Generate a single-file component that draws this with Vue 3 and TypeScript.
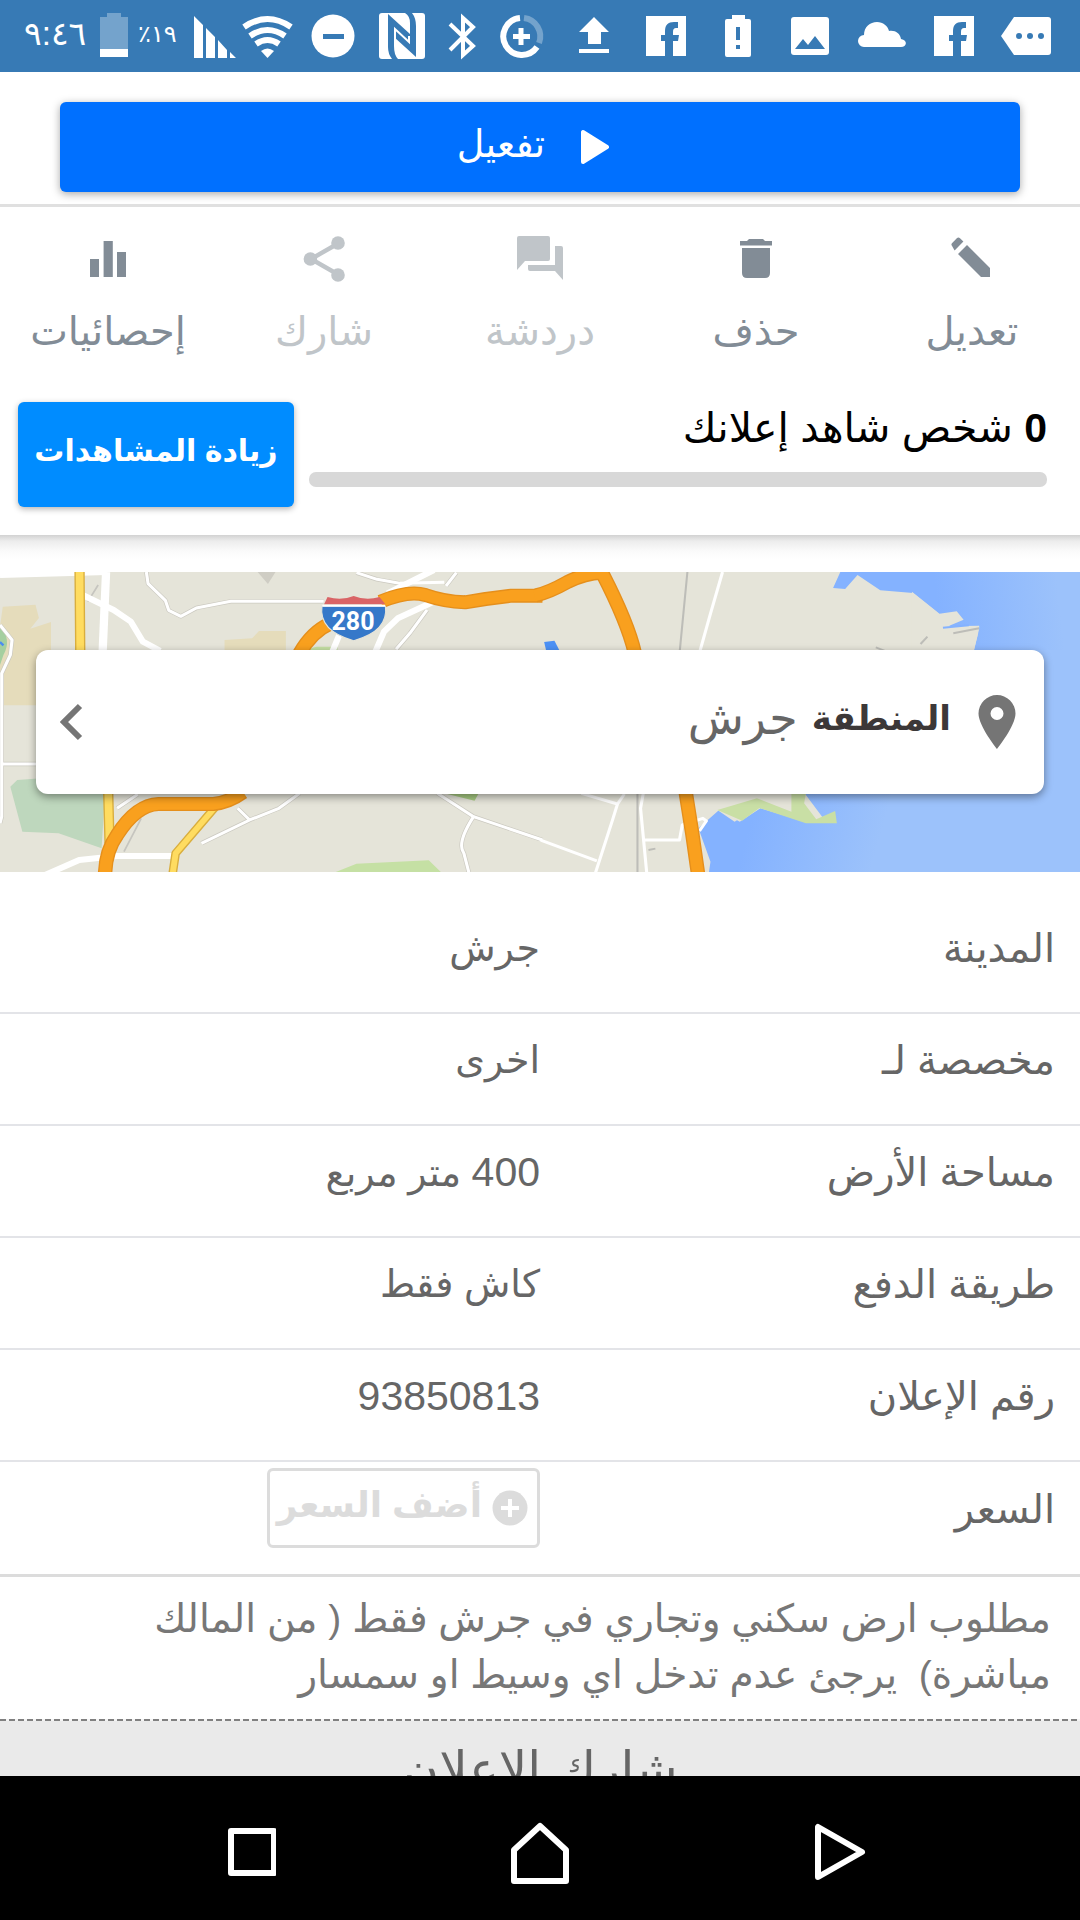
<script setup lang="ts">
interface Detail {
  label: string
  value: string
  number?: string
}

const details: Detail[] = [
  { label: 'المدينة', value: 'جرش' },
  { label: 'مخصصة لـ', value: 'اخرى' },
  { label: 'مساحة الأرض', number: '400', value: ' متر مربع' },
  { label: 'طريقة الدفع', value: 'كاش فقط' },
  { label: 'رقم الإعلان', number: '93850813', value: '' },
]
</script>

<template>
  <div class="screen" dir="rtl">
    <header class="status" dir="ltr">
      <span class="time">٩:٤٦</span>
      <svg width="42" height="72" viewBox="94 0 42 72"><path fill="#74a3cc" d="M107 13h14v4h7v32h-28V17h7z" /><path fill="#fff" d="M100 49h28v8h-28z" /></svg>
      <span class="percent">٪١٩</span>
      <svg width="50" height="72" viewBox="188 0 50 72"><path fill="#fff" d="M194 16l9 9v33h-9zM206 28l9 9v21h-9zM218 40l9 10v8h-9zM230 52l6 6h-6z" /></svg>
      <svg width="62" height="72" viewBox="238 0 62 72">
        <g fill="none" stroke="#fff" stroke-width="6">
          <path d="M244 27Q267.500 11 291 27M250 36Q267.500 24 285 36M256 44Q267.500 36 279 44" />
        </g>
        <path fill="#fff" d="M261 51q6.500-5 13 0l-6.500 7z" />
      </svg>
      <svg width="66" height="72" viewBox="300 0 66 72"><circle cx="333" cy="36" r="21.500" fill="#fff" /><path fill="#377ab5" d="M323 34h21v5h-21z" /></svg>
      <svg width="72" height="72" viewBox="366 0 72 72">
        <rect x="379" y="13" width="46" height="46" rx="3" fill="#fff" />
        <path fill="#377ab5" d="M388 14l22 20V23q0-7-5-10h7q4 5 4 13v31l-22-20v9q0 9 4 13h-6q-4-5-4-12z" />
        <path fill="none" stroke="#fff" stroke-width="2" d="M395 40V29l14 13v-6" />
      </svg>
      <svg width="48" height="72" viewBox="438 0 48 72"><path fill="none" stroke="#fff" stroke-width="4" d="M450 24l23 22-10 9V18l10 9-23 23" /></svg>
      <svg class="notice" width="72" height="72" viewBox="486 0 72 72">
        <g fill="none" stroke-width="6">
          <path stroke="#fff" d="M520 18a18.500 18.500 0 1 0 17 29" />
          <path stroke="#74a3cc" d="M524 18a18.500 18.500 0 0 1 15 25" />
          <path stroke="#fff" stroke-width="5" d="M521 28v17M513 36.500h17" />
        </g>
      </svg>
      <svg width="72" height="72" viewBox="558 0 72 72"><path fill="#fff" d="M594 17l15 15h-8v12h-13V32h-9zM579 49h30v4h-30z" /></svg>
      <svg width="72" height="72" viewBox="630 0 72 72"><path fill="#fff" d="M646 16h40v40h-13V41h5l1-6h-6v-3c0-3 1-4 3-4h2v-6h-4c-6 0-9 3-9 9v4h-4v6h4v15h-19z" /></svg>
      <svg width="72" height="72" viewBox="702 0 72 72"><path fill="#fff" d="M732 15h13v4h4q2 0 2 2v34q0 2-2 2h-22q-2 0-2-2V21q0-2 2-2h5z" /><path fill="#377ab5" d="M736 27h4v13h-4zM736 45h4v4h-4z" /></svg>
      <svg width="72" height="72" viewBox="774 0 72 72"><rect x="791" y="17" width="38" height="38" rx="3" fill="#fff" /><path fill="#377ab5" d="M795 49l8-10 5 6 7-9 10 13z" /></svg>
      <svg width="72" height="72" viewBox="846 0 72 72"><path fill="#fff" d="M864 47a6 6 0 0 1 0-12c0-8 6-13 13-13 6 0 11 4 12 9 6-1 11 2 12 8 7 1 6 8 0 8z" /></svg>
      <svg width="72" height="72" viewBox="918 0 72 72"><path fill="#fff" d="M934 16h40v40h-13V41h5l1-6h-6v-3c0-3 1-4 3-4h2v-6h-4c-6 0-9 3-9 9v4h-4v6h4v15h-19z" /></svg>
      <svg width="72" height="72" viewBox="990 0 72 72"><path fill="#fff" d="M1014 17h34q3 0 3 3v32q0 3-3 3h-34l-13-19z" /><g fill="#377ab5"><circle cx="1019" cy="36" r="3" /><circle cx="1030" cy="36" r="3" /><circle cx="1041" cy="36" r="3" /></g></svg>
    </header>

    <main class="content">
      <section class="activate-bar">
        <button class="activate" type="button">
          <svg width="28" height="36" viewBox="0 0 28 36"><path fill="#fff" stroke="#fff" stroke-width="4" stroke-linejoin="round" d="M2 3v30l24-15z" /></svg>
          <span>تفعيل</span>
        </button>
      </section>

      <section class="owner">
        <nav class="actions">
          <button type="button">
            <svg width="48" height="54" viewBox="0 0 24 27"><path d="M21 22v-4.500L9.500 6 5 10.500 16.500 22zM3.300 8.700L7.700 4.300 6 2.600q-.8-.8-1.600 0L2.100 5q-.8.800 0 1.600z" /></svg>
            <span>تعديل</span>
          </button>
          <button type="button">
            <svg width="48" height="54" viewBox="0 0 24 27"><path d="M5 7.500h14V20q0 2.500-2.500 2.500h-9Q5 22.500 5 20zM8.500 3h7l1 1H20v2.200H4V4h3.500z" /></svg>
            <span>حذف</span>
          </button>
          <button type="button" class="faded">
            <svg width="48" height="54" viewBox="0 0 24 27"><path d="M22.500 6.500h-3v9.500H6v2q0 1 1 1h12.500l4 4.500V7.500q0-1-1-1zM17 13V2.500q0-1-1-1H1.500q-1 0-1 1V18.500l4-4.500H16q1 0 1-1z" /></svg>
            <span>دردشة</span>
          </button>
          <button type="button" class="faded">
            <svg width="48" height="54" viewBox="0 0 24 27"><path fill="none" stroke="currentColor" stroke-width="2.200" d="M19.500 5L5.500 13l14 8" /><circle cx="19" cy="5" r="3.400" /><circle cx="5.200" cy="13" r="3.400" /><circle cx="19" cy="21" r="3.400" /></svg>
            <span>شارك</span>
          </button>
          <button type="button">
            <svg width="48" height="54" viewBox="0 0 24 27"><path d="M3 13h4.500v9H3zM9.800 4h4.600v18H9.800zM16.500 9.500H21V22h-4.500z" /></svg>
            <span>إحصائيات</span>
          </button>
        </nav>
        <div class="views">
          <div class="counter">
            <p id="views-label"><b>0</b> شخص شاهد إعلانك</p>
            <div class="track" role="progressbar" aria-valuenow="0" aria-labelledby="views-label"></div>
          </div>
          <button class="boost" type="button">زيادة المشاهدات</button>
        </div>
      </section>
      <div class="owner-shade"></div>

      <section class="map">
        <svg class="map-art" viewBox="0 0 1080 300" preserveAspectRatio="xMidYMid slice" aria-hidden="true">
          <defs>
            <linearGradient id="bay-north" gradientUnits="userSpaceOnUse" x1="1150" y1="100" x2="1500" y2="60">
              <stop offset="0" stop-color="#84b2ff" />
              <stop offset="1" stop-color="#9cc2fb" />
            </linearGradient>
            <linearGradient id="bay-south" gradientUnits="userSpaceOnUse" x1="600" y1="830" x2="960" y2="930">
              <stop offset="0" stop-color="#84b2ff" />
              <stop offset="1" stop-color="#9cc2fb" />
            </linearGradient>
          </defs>
          <rect width="1080" height="300" fill="#e5e4d9" />
          <g transform="translate(0 -12) scale(.3444 .3333)" fill="none" stroke-linejoin="round">
            <g fill="#e5dcbb" stroke="none">
              <path d="M8 140l95-6 10 40-25 32 60-20v250H0V200zM652 240l80-5 20-22h78v60H652z" />
            </g>
            <path fill="#bed7bd" d="M50 660l70-5 185 40-10 170-125-45-105-5-35-135z" />
            <path fill="#a5cfa0" d="M0 195q35 45 10 90l-10 30z" />
            <path stroke="#4b8df0" stroke-width="7" d="M0 246l10 10" />
            <path fill="#c5e0a4" d="M975 936l60-25 210-10 35 35zM880 270l40-10h60v20z" />
            <path fill="#a8cc83" d="M1290 700h100l-12 22z" />
            <path stroke="#c6c5bf" stroke-width="5" d="M285 75l-30 50M410 775l-50 100" />
            <path fill="#cfcdc4" d="M748 36h52l-22 36z" />
            <g stroke="#cbc9c0" stroke-width="13">
              <path d="M425 36l5 35 50 50 10 30 35 18 45-25 100-20h270M1035 38l60 20 65 12M1325 38l-30 40M1240 150l-50 70-40 48M0 195l35 45-5 45-25 55v430L0 790M5 612h100M870 700l-60 45-85 35-140 70M690 745l35 35M1270 700l105 70 200 70M1375 770q-50 80-28 110l15 60M340 745l60-42" />
            </g>
            <g stroke="#fff" stroke-width="9">
              <path d="M425 36l5 35 50 50 10 30 35 18 45-25 100-20h270M1035 38l60 20 65 12 130-3M1325 38l-30 40M1240 150l-50 70-40 48M0 195l35 45-5 45-25 55v430L0 790M5 612h100M870 700l-60 45-85 35-140 70M690 745l35 35M1270 700l105 70 200 70M1375 770q-50 80-28 110l15 60M340 745l60-42" />
            </g>
            <g stroke="#fff" stroke-width="18">
              <path d="M0 45l310-9M240 105l90 45 50 35 35 60 50 28M120 950l110-50 110-12h160M1260 30l-135 70M1270 120l-115 55-40 40-25 60M985 225l-20 50" />
            </g>
            <path stroke="#fff" stroke-width="24" d="M308 36l-10 240" />
            <path stroke="#d9ae3e" stroke-width="30" d="M231 36l2 240M314 690l4 160" />
            <path stroke="#ffdc60" stroke-width="22" d="M231 36l2 240M314 690l4 160" />
            <path stroke="#d9ae3e" stroke-width="25" d="M630 735l-120 145-10 70" />
            <path stroke="#ffdc60" stroke-width="17" d="M630 735l-120 145-10 70" />
            <path stroke="#e58f1c" stroke-width="42" d="M305 950q0-75 35-125 55-90 120-93h160q45-5 85-35M870 280q35-65 90-90M1105 125q80-35 130-20 55 20 115 22l60-10 75-10h90" />
            <path stroke="#f9a01e" stroke-width="34" d="M305 950q0-75 35-125 55-90 120-93h160q45-5 85-35M870 280q35-65 90-90M1105 125q80-35 130-20 55 20 115 22l60-10 75-10h90" />
            <path fill="#3578c9" stroke="#e5e4d9" stroke-width="3" d="M935 138q-10 75 92 104 102-29 92-104z" />
            <path fill="#d96466" d="M941 133l10-22q40 12 76-3 36 15 75 3l17 22z" />
            <path stroke="#fff" stroke-width="6" d="M936 137h182" />
          </g>
          <text x="353" y="58" text-anchor="middle" class="route">280</text>
          <g transform="translate(540 -12) scale(.3444 .3333)" fill="none" stroke-linejoin="round">
            <path fill="#9cc2fb" d="M1270 270l5-75-90-45h383v786H900V700h330z" />
            <path fill="url(#bay-north)" d="M872 36h700v234h-312l18-73-80 10-45-50-70-58-95-8-66-46-36 42-35-3z" />
            <path fill="#e5e4d9" d="M1080 95l80 66 50-7 20 25-45 20 90-2-5 30-10 45h-180z" />
            <path fill="url(#bay-south)" d="M490 940l5-35-35-100 60-55 60 35 60-40 130 40 60 0-65-90h807v245z" />
            <path fill="#e5e4d9" d="M500 700h270l-5 30-140 15-60 40-50-35-60 60z" />
            <path fill="#c9dfa5" d="M515 750l115-35 100 40v-55h42l-5 30 35 48 55-25 5 37h-90l-135-46-50 38z" />
            <path fill="#4c91f5" d="M12 246l30-4 15 30H18z" />
            <g stroke="#bdbdb8" stroke-width="6"><path d="M428 36l-22 235M1105 252l20-22M1275 205l-75 15M315 870l20-4M283 700v240M975 262l30 12" /></g>
            <path stroke="#84b2ff" stroke-width="6" d="M1170 203l75-7" />
            <g stroke="#fff" stroke-width="9">
              <path d="M530 36l-35 125-30 110M120 700l105 32 20-30M225 732l-15 50-50 160M0 840l165 63M300 700l-8 45 18 195M305 840h100l8-45 60-20 10 8-20 30" />
            </g>
            <path stroke="#e58f1c" stroke-width="42" d="M-12 106Q25 98 80 66 130 40 180 38q75 150 95 240M422 690l20 130 18 130" />
            <path stroke="#f9a01e" stroke-width="34" d="M-16 107Q25 98 80 66 130 40 180 38q75 150 95 240M422 690l20 130 18 130" />
          </g>
        </svg>
        <a class="place" href="#map">
          <svg width="38" height="54" viewBox="0 0 38 54"><path fill="#757575" fill-rule="evenodd" d="M19 0a18.500 18.500 0 0 1 18.500 18.500C37.500 31 19 54 19 54S.5 31 .5 18.500A18.500 18.500 0 0 1 19 0zm0 12a6.500 6.500 0 1 0 0 13 6.500 6.500 0 0 0 0-13z" /></svg>
          <b>المنطقة</b>
          <span class="place-name">جرش</span>
          <svg class="chevron" width="24" height="38" viewBox="0 0 24 38"><path fill="none" stroke="#757575" stroke-width="6" d="M20 3L4 19l16 16" /></svg>
        </a>
      </section>

      <table class="details">
        <tbody>
          <tr v-for="row in details" :key="row.label">
            <th scope="row">{{ row.label }}</th>
            <td><span v-if="row.number" class="num">{{ row.number }}</span>{{ row.value }}</td>
          </tr>
          <tr>
            <th scope="row">السعر</th>
            <td class="price">
              <button class="add-price" type="button">
                <svg width="36" height="36" viewBox="0 0 36 36"><circle cx="18" cy="18" r="17.500" fill="#dcdcdc" /><path stroke="#fff" stroke-width="4" d="M18 9v18M9 18h18" /></svg>
                <span>أضف السعر</span>
              </button>
            </td>
          </tr>
        </tbody>
      </table>

      <p class="description">مطلوب ارض سكني وتجاري في جرش فقط ( من المالك<br />مباشرة)&nbsp; يرجئ عدم تدخل اي وسيط او سمسار</p>

      <svg class="dashes" width="100%" height="2" aria-hidden="true"><line x1="0" y1="1" x2="100%" y2="1" stroke="#808080" stroke-width="2" stroke-dasharray="6 3" /></svg>
      <section class="share"><h2>شارك الإعلان</h2></section>
    </main>

    <footer class="navbar" dir="ltr">
      <button type="button" aria-label="التطبيقات الأخيرة"><svg width="72" height="72" viewBox="0 0 72 72"><rect x="27" y="16" width="43" height="42" /></svg></button>
      <button type="button" aria-label="الرئيسية"><svg width="72" height="72" viewBox="0 0 72 72"><path d="M10 35L36 11l26 24v31H10z" /></svg></button>
      <button type="button" aria-label="رجوع"><svg width="72" height="72" viewBox="0 0 72 72"><path d="M14 12v50l44-25z" /></svg></button>
    </footer>
  </div>
</template>

<style>
body {
  margin: 0;
}
</style>

<style scoped>
.screen {
  display: flex;
  flex-direction: column;
  height: 100vh;
  overflow: hidden;
  background: #fff;
  color: #666;
  font-family: "Liberation Sans", "DejaVu Sans", sans-serif;
  font-size: 40px;
}

button {
  margin: 0;
  padding: 0;
  border: 0;
  background: none;
  color: inherit;
  font: inherit;
}

svg {
  display: block;
  flex: none;
}

.status {
  display: flex;
  align-items: center;
  flex: none;
  height: 72px;
  padding: 0 18px 0 24px;
  background: #377ab5;
  color: #fff;
}

.time {
  width: 70px;
  height: 72px;
  font-size: 33px;
  line-height: 68px;
  white-space: nowrap;
}

.percent {
  width: 50px;
  height: 72px;
  padding-left: 2px;
  font-size: 24px;
  line-height: 68px;
  white-space: nowrap;
}

.notice {
  margin-left: auto;
}

.content {
  flex: 1;
  min-height: 0;
  overflow: hidden;
}

.activate-bar {
  padding: 30px 60px 12px;
  border-bottom: 3px solid #e0e0e0;
}

.activate {
  display: flex;
  align-items: center;
  justify-content: center;
  gap: 36px;
  width: 100%;
  height: 90px;
  padding-right: 14px;
  border-radius: 6px;
  background: #0070ff;
  color: #fff;
  font-size: 38px;
  box-shadow: 0 2px 8px rgba(0, 0, 0, 0.35);
}

.activate span {
  padding-bottom: 6px;
}

.owner {
  height: 328px;
}

.owner-shade {
  height: 24px;
  background: linear-gradient(#d2d2d2, #ececec 25%, #fafafa 65%, #fff);
}

.actions {
  display: grid;
  grid-template-columns: repeat(5, 1fr);
  padding-top: 26px;
  color: #828c96;
}

.actions button {
  display: flex;
  flex-direction: column;
  align-items: center;
  gap: 14px;
  line-height: 60px;
}

.actions svg {
  fill: currentColor;
}

.actions .faded {
  color: #c0c5c9;
}

.views {
  display: flex;
  align-items: flex-start;
  gap: 15px;
  padding: 41px 33px 0 18px;
}

.counter {
  flex: 1;
  color: #000;
}

.counter p {
  margin: 0;
  font-size: 41px;
  line-height: 52px;
}

.track {
  height: 15px;
  margin-top: 18px;
  border-radius: 7px;
  background: #d8d8d8;
}

.boost {
  width: 276px;
  height: 105px;
  padding-bottom: 8px;
  border-radius: 6px;
  background: #008cff;
  color: #fff;
  font-size: 30px;
  font-weight: bold;
  white-space: nowrap;
  box-shadow: 0 2px 6px rgba(0, 0, 0, 0.3);
}

.map {
  position: relative;
  margin-top: 13px;
  padding: 78px 36px;
}

.map-art {
  position: absolute;
  inset: 0;
  width: 100%;
  height: 100%;
}

.route {
  fill: #fff;
  font: bold 25px Roboto, sans-serif;
}

.place {
  position: relative;
  display: flex;
  align-items: center;
  height: 144px;
  padding: 0 28px 0 24px;
  box-sizing: border-box;
  border-radius: 12px;
  background: #fff;
  color: #666;
  text-decoration: none;
  box-shadow: 0 3px 8px rgba(0, 0, 0, 0.4);
}

.place b {
  margin: 0 27px 0 14px;
  padding-bottom: 8px;
  color: #3c3838;
  font-size: 34px;
}

.place-name {
  padding-bottom: 8px;
  font-size: 46px;
}

.chevron {
  margin-right: auto;
}

.details {
  width: 100%;
  margin-top: 29px;
  border-collapse: collapse;
  table-layout: fixed;
}

.details th,
.details td {
  box-sizing: border-box;
  width: 50%;
  height: 112px;
  padding: 0 0 18px;
  border-bottom: 2px solid #e3e4e8;
  font-weight: normal;
  text-align: right;
}

.details td {
  font-size: 38px;
}

.details th {
  padding-right: 25px;
}

.details tr:last-child th,
.details tr:last-child td {
  height: 114px;
  border-bottom: 3px solid #dcdcdc;
}

.details .num {
  font-size: 41px;
}

.details .price {
  padding: 6px 0 0;
  vertical-align: top;
}

.add-price {
  display: flex;
  align-items: center;
  gap: 10px;
  height: 80px;
  padding: 0 9px 0 7px;
  border: 3px solid #dcdcdc;
  border-radius: 6px;
  color: #dcdcdc;
  font-size: 36px;
  font-weight: bold;
  white-space: nowrap;
}

.add-price span {
  padding-bottom: 6px;
}

.description {
  margin: 0;
  padding: 14px 29px 16px;
  color: #777;
  font-size: 39px;
  line-height: 56px;
}

.dashes {
  background: #f4f4f4;
}

.share {
  background: #eaeaea;
}

.share h2 {
  margin: 0;
  font-size: 50px;
  font-weight: normal;
  line-height: 98px;
  text-align: center;
}

.navbar {
  display: flex;
  align-items: center;
  justify-content: center;
  gap: 228px;
  flex: none;
  box-sizing: border-box;
  height: 144px;
  padding-top: 6px;
  background: #000;
}

.navbar svg {
  fill: none;
  stroke: #fff;
  stroke-width: 6;
  stroke-linejoin: round;
}
</style>
